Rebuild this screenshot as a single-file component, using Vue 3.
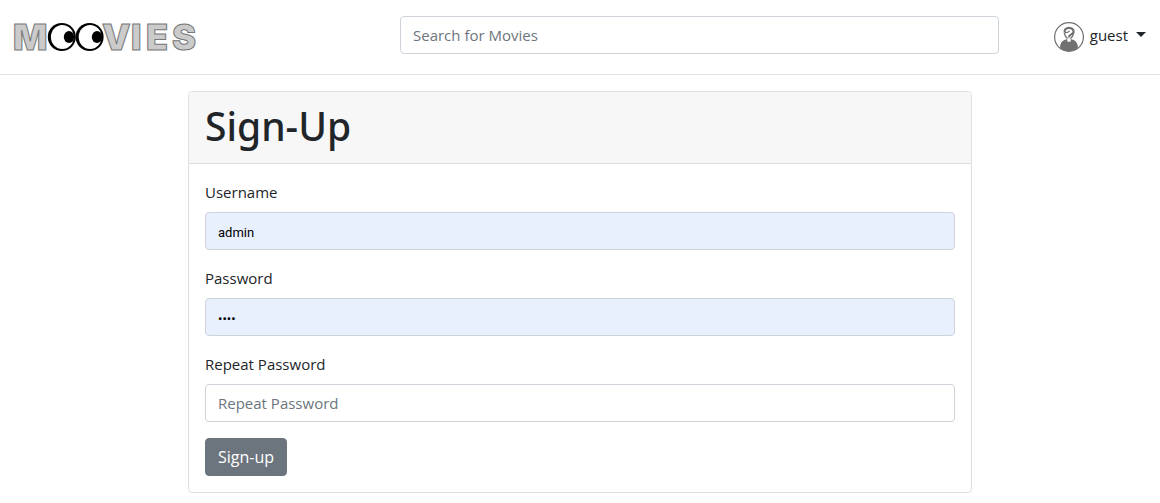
<script setup>
import { ref } from 'vue'

const search = ref('')
const username = ref('admin')
const password = ref('pass')
const repeat = ref('')
</script>

<template>
  <header class="navbar">
    <a class="brand" href="#" aria-label="Moovies">
      <svg width="190" height="48" viewBox="0 0 190 48">
        <g class="letters">
          <text x="0" y="39">M</text>
          <text x="89" y="39">V</text>
          <text x="118" y="39">I</text>
          <text x="133" y="39">E</text>
          <text x="159" y="39">S</text>
        </g>
        <circle cx="48.800" cy="26" r="14" />
        <circle cx="76.600" cy="26" r="14" />
        <ellipse cx="49.300" cy="26" rx="11.400" ry="12" fill="#fff" />
        <ellipse cx="77.100" cy="26" rx="11.400" ry="12" fill="#fff" />
        <ellipse cx="56" cy="26" rx="5.200" ry="6" />
        <ellipse cx="84" cy="26" rx="5.200" ry="6" />
      </svg>
    </a>
    <input v-model="search" class="control" type="search" placeholder="Search for Movies" aria-label="Search for Movies" />
    <button class="user" type="button" aria-haspopup="true">
      <svg class="avatar" width="30" height="30" viewBox="0 0 30 30" fill="none">
        <circle cx="15" cy="15" r="14.4" stroke="#707070" stroke-width="1.2" />
        <path d="M6 25.500C6.300 20.500 8.600 18.300 12.500 17.300L15 18.500L17.500 17.300C21.400 18.300 23.700 20.500 24 25.500C21.500 28 18.500 29.300 15 29.300C11.500 29.300 8.500 28 6 25.500Z" fill="#707070" />
        <path d="M10.700 10.500C10.200 7.500 12 5.900 15 5.900C18 5.900 20 7.700 19.500 10.300C19.100 12.600 15.200 12.200 15 15" stroke="#707070" stroke-width="2.200" />
        <path d="M10.700 10.500C12.500 11 14.200 10.300 15.700 8.800M10.200 11C10.800 13.600 12 15.300 13.300 16M19.800 11C19.200 13.600 18 15.300 16.700 16" stroke="#707070" stroke-width="1.200" />
        <rect x="13" y="16" width="4" height="4" fill="#fff" stroke="#707070" stroke-width=".6" />
      </svg>
      <span>guest</span>
      <span class="caret"></span>
    </button>
  </header>

  <main class="page">
    <section class="card">
      <div class="card-header">
        <h1>Sign-Up</h1>
      </div>
      <form class="card-body" @submit.prevent>
        <div class="field">
          <label for="username">Username</label>
          <input id="username" v-model="username" class="control filled" type="text" />
        </div>
        <div class="field">
          <label for="password">Password</label>
          <input id="password" v-model="password" class="control filled" type="password" />
        </div>
        <div class="field">
          <label for="repeat">Repeat Password</label>
          <input id="repeat" v-model="repeat" class="control" type="password" placeholder="Repeat Password" />
        </div>
        <button class="submit" type="submit">Sign-up</button>
      </form>
    </section>
  </main>
</template>

<style>
body {
  margin: 0;
  background: #fff;
  color: #212529;
  font-family: "Segoe UI", "Open Sans", "Noto Sans", sans-serif;
  font-size: 15px;
  line-height: 24px;
}
</style>

<style scoped>
.navbar {
  display: grid;
  grid-template-columns: 387fr 599fr 148fr;
  align-items: center;
  padding: 11px 13px 15px;
  border-bottom: 1px solid #dee2e6;
}
.brand {
  display: flex;
}
.letters {
  font-family: Inter, sans-serif;
  font-weight: 900;
  font-size: 36px;
  line-height: 44px;
  fill: #cbcbcb;
  stroke: #777;
  stroke-width: 1px;
}
.control {
  box-sizing: border-box;
  width: 100%;
  height: 38px;
  padding: 6px 12px;
  border: 1px solid #ced4da;
  border-radius: 4px;
  background: #fff;
  color: #495057;
  font: inherit;
  outline: none;
  appearance: none;
}
.control::placeholder {
  color: #6c757d;
  opacity: 1;
}
.control.filled {
  padding: 8px 12px 6px;
  background: #e8f0fe;
  color: #000;
  font-family: Roboto, sans-serif;
  font-size: 13px;
}
.user {
  display: flex;
  align-items: center;
  justify-self: end;
  padding: 0;
  border: 0;
  background: none;
  color: #212529;
  font: inherit;
}
.avatar {
  margin: 4px 6px 0 0;
}
.caret {
  margin: 0 1px 2px 8px;
  border-top: 5px solid #212529;
  border-right: 5px solid transparent;
  border-left: 5px solid transparent;
}
.page {
  padding: 16px 16px 10px;
}
.card {
  box-sizing: border-box;
  max-width: 784px;
  margin: 0 auto;
  border: 1px solid #dfdfdf;
  border-radius: 4px;
}
.card-header {
  padding: 10px 16px 14px;
  border-bottom: 1px solid #dfdfdf;
  border-radius: 3px 3px 0 0;
  background: #f7f7f7;
}
h1 {
  margin: 0;
  font-family: "Noto Sans", sans-serif;
  font-size: 39px;
  font-weight: 500;
  line-height: 47px;
}
.card-body {
  padding: 16px;
}
.field {
  margin-bottom: 16px;
}
label {
  display: block;
  margin-bottom: 8px;
}
.submit {
  display: block;
  height: 38px;
  padding: 6px 12px;
  border: 1px solid #6c757d;
  border-radius: 4px;
  background: #6c757d;
  color: #fff;
  font: inherit;
  font-size: 16px;
}
</style>
